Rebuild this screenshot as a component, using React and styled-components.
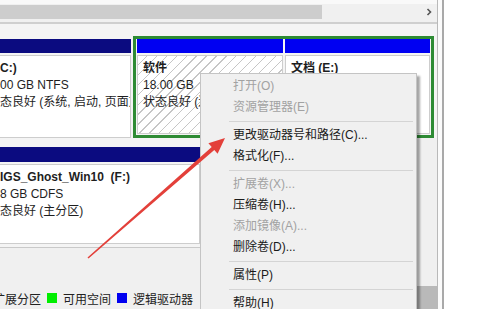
import React from "react";
import styled, { createGlobalStyle } from "styled-components";

const GlobalStyle = createGlobalStyle`
    body {
        margin: 0;
        background: #ffffff;
        font-family: "Liberation Sans", "Noto Sans CJK SC", sans-serif;
    }
`;

const Screen = styled.div`
    position: relative;
    width: 500px;
    height: 309px;
    overflow: hidden;
    display: flex;
    background: #ffffff;
    font-size: 12px;
    color: #1c1c1c;
`;

const Window = styled.div`
    width: 437px;
    height: 100%;
    display: flex;
    flex-direction: column;
    border-right: 1px solid #b9b9b9;
    overflow: hidden;
`;

const Frame = styled.div`
    width: 4px;
    background: #fbfbfb;
    border-right: 2px solid #a9a9a9;
`;

const TopScroll = styled.div`
    height: 17px;
    padding-top: 5px;
    display: flex;
    align-items: flex-start;
    background: #f0f0f0;
    box-shadow: inset 0 4px 0 #f9f9f9;
    border-bottom: 2px solid #cfcfcf;
`;

const ScrollThumb = styled.div`
    width: 322px;
    height: 14px;
    background: #cdcdcd;
`;

const ScrollArrow = styled.div`
    margin-left: auto;
    width: 16px;
    height: 14px;
    display: flex;
    align-items: center;
    justify-content: center;
`;

const DiskPane = styled.div`
    flex: 1;
    display: flex;
    flex-direction: column;
    padding-top: 12px;
    background: #f4f4f4;
`;

const DiskRow = styled.div`
    height: 102px;
    display: flex;
`;

const Partition = styled.div`
    width: ${(p) => p.$width}px;
    padding-top: ${(p) => p.$top || 0}px;
    display: flex;
    flex-direction: column;
    flex-shrink: 0;
`;

const PartHeader = styled.div`
    height: ${(p) => p.$h || 14}px;
    background: ${(p) => p.$color};
`;

const PartBody = styled.div`
    flex: 1;
    margin-top: 2px;
    padding: 4px 0 0 ${(p) => p.$pad}px;
    border: 1px solid #cdcdcd;
    border-left: ${(p) => (p.$pad ? "1px solid #cdcdcd" : "none")};
    background: ${(p) =>
        p.$hatch
            ? "repeating-linear-gradient(135deg, #ffffff 0px, #ffffff 6px, #c6c6c6 6px, #c6c6c6 7px)"
            : "#ffffff"};
    overflow: hidden;
    white-space: nowrap;
`;

const PartLine = styled.div`
    line-height: 17px;
    font-weight: ${(p) => (p.$bold ? 700 : 400)};
    color: #1e1e1e;
`;

const SelectBox = styled.div`
    margin-left: 2px;
    width: 294px;
    padding: 0 0 1px 1px;
    border: 3px solid #2e8b34;
    display: flex;
    gap: 2px;
`;

const Lower = styled.div`
    flex: 1;
    display: flex;
`;

const LowerMain = styled.div`
    flex: 1;
    display: flex;
    flex-direction: column;
    padding-top: 9px;
`;

const Row2 = styled.div`
    height: 97px;
    display: flex;
`;

const PaneDivider = styled.div`
    height: 3px;
    border-bottom: 1px solid #c9c9c9;
`;

const LegendArea = styled.div`
    flex: 1;
    display: flex;
    align-items: flex-end;
    padding-bottom: 3px;
    background: #f0f0f0;
`;

const Legend = styled.div`
    margin-left: -7px;
    display: flex;
    align-items: center;
    height: 16px;
    white-space: nowrap;
    color: #222222;
`;

const Swatch = styled.span`
    width: 10px;
    height: 10px;
    margin: 0 6px 0 6px;
    background: ${(p) => p.$color};
`;

const VScroll = styled.div`
    width: 20px;
    display: flex;
    flex-direction: column;
    justify-content: flex-end;
    background: #f0f0f0;
`;

const VThumb = styled.div`
    height: 23px;
    background: #b9b9b9;
`;

const Menu = styled.div`
    position: absolute;
    left: 200px;
    top: 73px;
    width: 215px;
    height: 260px;
    padding-top: 2px;
    background: #f0f0f0;
    border: 1px solid #c4c4c4;
    box-shadow: 3px 3px 2px rgba(0, 0, 0, 0.35);
    z-index: 2;
`;

const MenuItem = styled.div`
    height: 21px;
    line-height: 21px;
    padding-left: 32px;
    color: ${(p) => (p.$disabled ? "#a2a2a2" : "#1a1a1a")};
    white-space: nowrap;
`;

const MenuSep = styled.div`
    height: 7px;
    margin: 0 3px 0 28px;
    display: flex;
    align-items: center;

    &::after {
        content: "";
        flex: 1;
        height: 1px;
        background: #d4d4d4;
    }
`;

const Overlay = styled.svg`
    position: absolute;
    left: 0;
    top: 0;
    z-index: 3;
    pointer-events: none;
`;

const menu = [
    { label: "打开(O)", disabled: true },
    { label: "资源管理器(E)", disabled: true },
    "sep",
    { label: "更改驱动器号和路径(C)..." },
    { label: "格式化(F)..." },
    "sep",
    { label: "扩展卷(X)...", disabled: true },
    { label: "压缩卷(H)..." },
    { label: "添加镜像(A)...", disabled: true },
    { label: "删除卷(D)..." },
    "sep",
    { label: "属性(P)" },
    "sep",
    { label: "帮助(H)" },
];

function App() {
    return (
        <Screen>
            <GlobalStyle />
            <Window>
                <TopScroll>
                    <ScrollThumb />
                    <ScrollArrow>
                        <svg width="8" height="8" viewBox="0 0 8 8">
                            <polyline points="2.5,1 5.5,4 2.5,7" fill="none" stroke="#555" strokeWidth="1.6" />
                        </svg>
                    </ScrollArrow>
                </TopScroll>
                <DiskPane>
                    <DiskRow>
                        <Partition $width={131} $top={3}>
                            <PartHeader $color="#0b0b80" />
                            <PartBody $pad={0}>
                                <PartLine $bold>C:)</PartLine>
                                <PartLine>00 GB NTFS</PartLine>
                                <PartLine>态良好 (系统, 启动, 页面文件, 故障转储, 主分区)</PartLine>
                            </PartBody>
                        </Partition>
                        <SelectBox>
                            <Partition $width={146}>
                                <PartHeader $color="#0000f2" />
                                <PartBody $pad={5} $hatch>
                                    <PartLine $bold>软件</PartLine>
                                    <PartLine>18.00 GB</PartLine>
                                    <PartLine>状态良好 (逻辑驱动器)</PartLine>
                                </PartBody>
                            </Partition>
                            <Partition $width={145}>
                                <PartHeader $color="#0000f2" />
                                <PartBody $pad={5}>
                                    <PartLine $bold>文档 (E:)</PartLine>
                                    <PartLine>40.00 GB NTFS</PartLine>
                                    <PartLine>状态良好 (逻辑驱动器)</PartLine>
                                </PartBody>
                            </Partition>
                        </SelectBox>
                    </DiskRow>
                    <Lower>
                        <LowerMain>
                            <Row2>
                                <Partition $width={200}>
                                    <PartHeader $h={15} $color="#0b0b80" />
                                    <PartBody $pad={0}>
                                        <PartLine $bold>IGS_Ghost_Win10&nbsp;&nbsp;(F:)</PartLine>
                                        <PartLine>8 GB CDFS</PartLine>
                                        <PartLine>态良好 (主分区)</PartLine>
                                    </PartBody>
                                </Partition>
                            </Row2>
                            <PaneDivider />
                            <LegendArea>
                                <Legend>
                                    扩展分区
                                    <Swatch $color="#00ee00" />
                                    可用空间
                                    <Swatch $color="#0000f0" />
                                    逻辑驱动器
                                </Legend>
                            </LegendArea>
                        </LowerMain>
                        <VScroll>
                            <VThumb />
                        </VScroll>
                    </Lower>
                </DiskPane>
            </Window>
            <Frame />

            <Menu>
                {menu.map((item, i) =>
                    item === "sep" ? (
                        <MenuSep key={i} />
                    ) : (
                        <MenuItem key={i} $disabled={item.disabled}>
                            {item.label}
                        </MenuItem>
                    )
                )}
            </Menu>

            <Overlay width="500" height="309" viewBox="0 0 500 309">
                <polygon
                    points="87.5,257.5 211.7,147 208.4,143.2 225,138 217.6,153.8 214.3,150 88.5,258.5"
                    fill="#e3403a"
                />
            </Overlay>
        </Screen>
    );
}

export default App;
